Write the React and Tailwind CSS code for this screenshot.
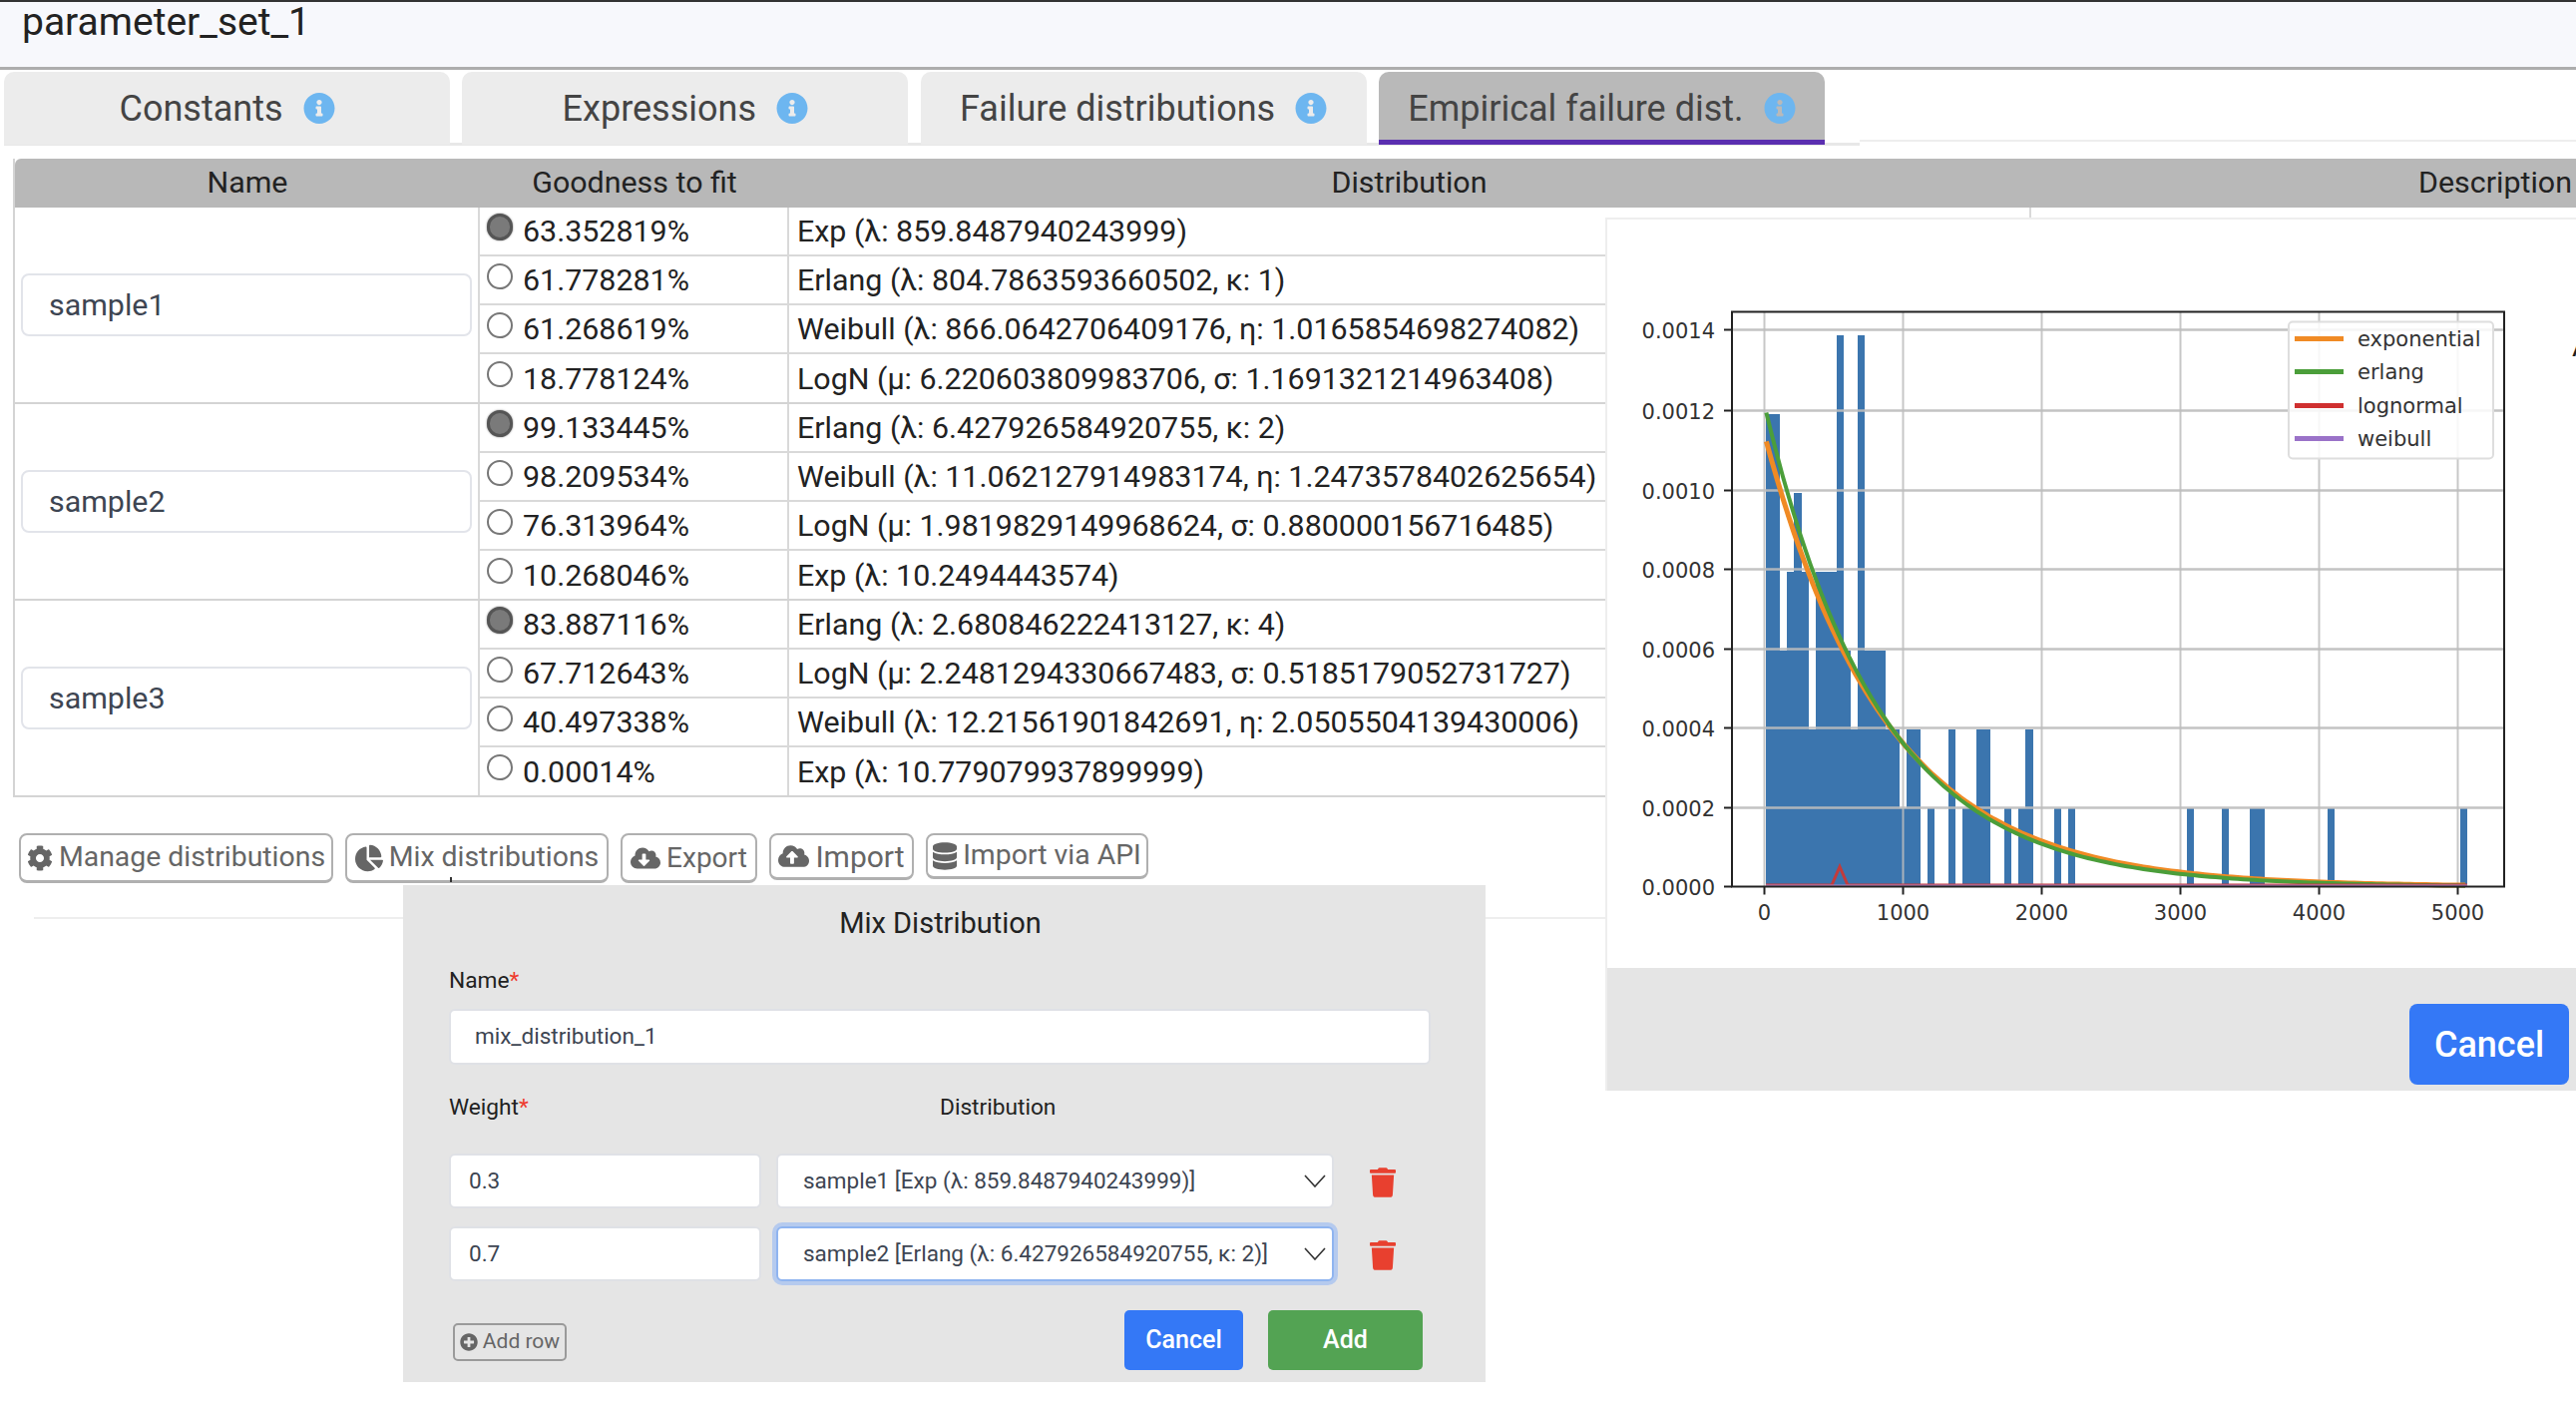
import { FaChartPie, FaCloudDownloadAlt, FaCloudUploadAlt, FaCog, FaDatabase, FaInfoCircle, FaPlusCircle, FaTrash } from "react-icons/fa";

const tabs = [
  { label: "Constants" },
  { label: "Expressions" },
  { label: "Failure distributions" },
  { label: "Empirical failure dist.", active: true },
];

const groups = [
  {
    name: "sample1",
    rows: [
      ["63.352819%", "Exp (λ: 859.8487940243999)"],
      ["61.778281%", "Erlang (λ: 804.7863593660502, κ: 1)"],
      ["61.268619%", "Weibull (λ: 866.0642706409176, η: 1.0165854698274082)"],
      ["18.778124%", "LogN (μ: 6.220603809983706, σ: 1.1691321214963408)"],
    ],
  },
  {
    name: "sample2",
    rows: [
      ["99.133445%", "Erlang (λ: 6.427926584920755, κ: 2)"],
      ["98.209534%", "Weibull (λ: 11.062127914983174, η: 1.2473578402625654)"],
      ["76.313964%", "LogN (μ: 1.9819829149968624, σ: 0.880000156716485)"],
      ["10.268046%", "Exp (λ: 10.2494443574)"],
    ],
  },
  {
    name: "sample3",
    rows: [
      ["83.887116%", "Erlang (λ: 2.680846222413127, κ: 4)"],
      ["67.712643%", "LogN (μ: 2.2481294330667483, σ: 0.5185179052731727)"],
      ["40.497338%", "Weibull (λ: 12.21561901842691, η: 2.0505504139430006)"],
      ["0.00014%", "Exp (λ: 10.779079937899999)"],
    ],
  },
];

const toolbar = [
  { label: "Manage distributions", Icon: FaCog, cls: "w-[315px] h-[50px] text-[28.4px]", icon: "w-[26px] h-[28px]" },
  { label: "Mix distributions", Icon: FaChartPie, cls: "w-[264px] h-[50px] text-[28.4px]", icon: "w-[28px] h-[30px]" },
  { label: "Export", Icon: FaCloudDownloadAlt, cls: "w-[137px] h-[50px] text-[28px]", icon: "w-[30px] h-[28px]" },
  { label: "Import", Icon: FaCloudUploadAlt, cls: "w-[145px] h-[47px] text-[30px]", icon: "w-[31px] h-[28px]" },
  { label: "Import via API", Icon: FaDatabase, cls: "w-[223px] h-[46px] text-[28.4px]", icon: "w-[24px] h-[28px]" },
];

// histogram: bin index -> height in counts, 100 bins, read off the picture
const bins = {
  0: 6, 1: 6, 2: 3, 3: 4, 4: 5, 5: 4, 6: 2, 7: 4, 8: 4, 9: 4, 10: 7, 11: 3, 12: 2, 13: 7, 14: 3, 15: 3, 16: 3,
  17: 2, 18: 2, 19: 1, 20: 2, 21: 2, 23: 1, 26: 2, 28: 1, 29: 1, 30: 2, 31: 2, 34: 1, 36: 1, 37: 2, 41: 1, 43: 1,
  60: 1, 65: 1, 69: 1, 70: 1, 80: 1, 99: 1,
};

const px = (v) => 1768.5 + v * 0.139;
const py = (v) => 888 - v * 398500;

function curve(lambda, scale = 1) {
  const pts = [];
  for (let v = 14; v <= 5072; v += 40) {
    pts.push(`${px(v).toFixed(1)},${py((scale / lambda) * Math.exp(-v / lambda)).toFixed(1)}`);
  }
  return pts.join(" ");
}

function Chart() {
  const yTicks = ["0.0000", "0.0002", "0.0004", "0.0006", "0.0008", "0.0010", "0.0012", "0.0014"];
  const yPos = [888, 809, 729, 650, 570, 491, 411, 330];
  const xTicks = [0, 1000, 2000, 3000, 4000, 5000];
  const legend = [
    ["exponential", "#f08a24", 339],
    ["erlang", "#4b9e3a", 372],
    ["lognormal", "#cf3030", 406],
    ["weibull", "#9a72c8", 439],
  ];
  return (
    <svg viewBox="1611 219.5 971 750" className="block w-[971px] h-[750px] font-['DejaVu_Sans',sans-serif]">
      {Object.entries(bins).map(([i, h]) => (
        <rect key={i} x={1770.3 + i * 7.03} y={888 - h * 79} width={7.1} height={h * 79} fill="#3b75ae" shapeRendering="crispEdges" />
      ))}
      {yPos.slice(1).map((y) => (
        <line key={y} x1="1736" x2="2510" y1={y} y2={y} stroke="#bdbdbd" strokeOpacity="0.9" strokeWidth="2.4" />
      ))}
      {xTicks.map((t) => (
        <line key={t} x1={px(t)} x2={px(t)} y1="312" y2="888" stroke="#bdbdbd" strokeOpacity="0.85" strokeWidth="2" />
      ))}
      <polyline points={curve(870, 0.99)} fill="none" stroke="#f08a24" strokeWidth="5" />
      <polyline points={curve(825)} fill="none" stroke="#4b9e3a" strokeWidth="4" />
      <polyline points="1770,886.5 1836,886.5 1844,868 1852,886.5 2473,886.5" fill="none" stroke="#c23b3b" strokeWidth="3" />
      <line x1="1770" x2="2473" y1="887" y2="887" stroke="#b583c4" strokeWidth="2" />
      <rect x="1736" y="312" width="774" height="576" fill="none" stroke="#222" strokeWidth="2" />
      {yTicks.map((t, i) => (
        <g key={t}>
          <line x1="1728" x2="1736" y1={yPos[i]} y2={yPos[i]} stroke="#222" strokeWidth="2" />
          <text x="1719" y={yPos[i] + 8} textAnchor="end" fontSize="21" fill="#333">{t}</text>
        </g>
      ))}
      {xTicks.map((t) => (
        <g key={t}>
          <line x1={px(t)} x2={px(t)} y1="888" y2="896" stroke="#222" strokeWidth="2" />
          <text x={px(t)} y="921" textAnchor="middle" fontSize="21" fill="#333">{t}</text>
        </g>
      ))}
      <rect x="2294" y="322" width="205" height="137" rx="4" fill="#fff" fillOpacity="0.85" stroke="#dedede" strokeWidth="2" />
      {legend.map(([name, color, y]) => (
        <g key={name}>
          <line x1="2300" x2="2349" y1={y} y2={y} stroke={color} strokeWidth="5" />
          <text x="2363" y={y + 7} fontSize="21" fill="#333">{name}</text>
        </g>
      ))}
    </svg>
  );
}

function Radio({ checked }) {
  return checked ? (
    <span className="mt-[6px] w-[26px] h-[27px] shrink-0 rounded-full bg-[#7a7a7a] border-[3px] border-[#555] shadow-[0_0_2px_#777]" />
  ) : (
    <span className="mt-[7px] w-[26px] h-[26px] shrink-0 rounded-full bg-white border-2 border-[#777]" />
  );
}

function Group({ group }) {
  return (
    <div className="flex border-b-2 border-[#d4d4d4]">
      <div className="w-[466px] shrink-0 flex items-center pl-[6px] pr-[6px] border-r-2 border-[#d9d9d9]">
        <div className="w-full h-[63px] flex items-center pl-[26px] rounded-[8px] border-2 border-[#e2e4ea] bg-white text-[30.4px] text-[#3d4552]">
          {group.name}
        </div>
      </div>
      <div className="flex-1">
        {group.rows.map(([fit, dist], i) => (
          <div key={fit} className={`flex ${i < 3 ? "h-[49px] border-b-2 border-[#d9d9d9]" : "h-[48px]"}`}>
            <div className="w-[310px] shrink-0 flex gap-[10px] pl-[7px] border-r-2 border-[#d9d9d9]">
              <Radio checked={i === 0} />
              <span className="self-center pt-[2px] text-[30.4px] leading-none text-[#222]">{fit}</span>
            </div>
            <span className="self-center pt-[2px] pl-[8px] text-[30.4px] leading-none text-[#222] whitespace-nowrap">{dist}</span>
          </div>
        ))}
      </div>
    </div>
  );
}

function TextBox({ className, children }) {
  return (
    <div className={`flex items-center rounded-[6px] bg-white border-2 border-[#dfe1e6] text-[22.5px] text-[#3d4552] whitespace-nowrap ${className}`}>
      {children}
    </div>
  );
}

function Chevron() {
  return (
    <svg viewBox="0 0 22 13" className="w-[22px] h-[13px] shrink-0 ml-auto mr-[6px]">
      <polyline points="1,1 11,12 21,1" fill="none" stroke="#333" strokeWidth="1.6" />
    </svg>
  );
}

function MixModal() {
  return (
    <div className="absolute left-[404px] top-[887px] w-[1085px] h-[498px] bg-[#e5e5e5] px-[46px] pt-[18px] text-[#222]">
      <div className="pr-[8px] text-center text-[29px] leading-[40px]">Mix Distribution</div>
      <div className="mt-[23px] text-[22.7px] leading-[30px]">
        Name<span className="text-[#ee3b2e]">*</span>
      </div>
      <TextBox className="mt-[13px] w-[984px] h-[56px] pl-[24px]">mix_distribution_1</TextBox>
      <div className="mt-[28px] flex text-[22.7px] leading-[30px]">
        <span className="w-[492px]">
          Weight<span className="text-[#ee3b2e]">*</span>
        </span>
        <span>Distribution</span>
      </div>
      <div className="mt-[31px] flex items-center h-[55px]">
        <TextBox className="w-[313px] h-full pl-[18px]">0.3</TextBox>
        <TextBox className="ml-[15px] w-[559px] h-full pl-[25px]">
          sample1 [Exp (λ: 859.8487940243999)]
          <Chevron />
        </TextBox>
        <FaTrash className="ml-[36px] mt-[3px] w-[26px] h-[30px] text-[#e8402f]" />
      </div>
      <div className="mt-[18px] flex items-center h-[55px]">
        <TextBox className="w-[313px] h-full pl-[18px]">0.7</TextBox>
        <TextBox className="ml-[15px] w-[559px] h-full pl-[25px] !border-[#8fb4f0] shadow-[0_0_0_4px_#b5caee]">
          sample2 [Erlang (λ: 6.427926584920755, κ: 2)]
          <Chevron />
        </TextBox>
        <FaTrash className="ml-[36px] mt-[3px] w-[26px] h-[30px] text-[#e8402f]" />
      </div>
      <div className="mt-[29px] flex items-start">
        <div className="ml-[4px] mt-[13px] w-[114px] h-[38px] flex items-center justify-center gap-[5px] rounded-[5px] border-2 border-[#9a9a9a] text-[21px] text-[#666]">
          <FaPlusCircle className="w-[18px] h-[18px]" />
          Add row
        </div>
        <div className="ml-[559px] w-[119px] h-[60px] flex items-center justify-center rounded-[5px] bg-[#3478f6] text-[25px] font-medium text-white">
          Cancel
        </div>
        <div className="ml-[25px] w-[155px] h-[60px] flex items-center justify-center rounded-[5px] bg-[#53a353] text-[25px] font-medium text-white">
          Add
        </div>
      </div>
    </div>
  );
}

export default function App() {
  return (
    <div className="relative w-[2582px] h-[1406px] overflow-hidden bg-white font-['Roboto',sans-serif]">
      <header className="h-[70px] border-t-2 border-t-[#333] border-b-[3px] border-b-[#adadad] bg-[#f7f8fc] pl-[22px] text-[39px] leading-[40px] text-[#222]">
        parameter_set_1
      </header>

      <div className="relative h-[75px] flex gap-[12.3px] pl-[4px] pt-[2px]">
        {tabs.map((tab) => (
          <div
            key={tab.label}
            className={`relative z-10 w-[447px] h-[73px] flex items-center justify-center gap-[20px] rounded-t-[10px] text-[36px] text-[#444] ${tab.active ? "bg-[#b9b9b9] shadow-[inset_0_-5px_0_#5b2fb0]" : "bg-[#ececec]"}`}
          >
            {tab.label}
            <FaInfoCircle className="w-[32px] h-[33px] text-[#6db6f0]" />
          </div>
        ))}
        <div className="absolute left-[4px] top-[73px] w-[1860px] h-[3px] bg-[#e8e8e8]" />
        <div className="absolute left-[1864px] top-[70px] right-0 h-[2px] bg-[#eeeeee]" />
      </div>

      <div className="ml-[13px] mt-[14px] w-[2955px] border-l-2 border-[#d4d4d4]">
        <div className="flex h-[49px] items-center pb-[2px] rounded-tl-[6px] bg-[#b8b8b8] text-[30.4px] text-[#222]">
          <span className="w-[466px] text-center">Name</span>
          <span className="w-[310px] text-center">Goodness to fit</span>
          <span className="w-[1243px] text-center">Distribution</span>
          <span className="w-[934px] text-center">Description</span>
        </div>
        <div className="relative">
          <div className="absolute left-[2019px] top-0 h-[600px] w-[2px] bg-[#d9d9d9]" />
          {groups.map((g) => (
            <Group key={g.name} group={g} />
          ))}
        </div>
      </div>

      <div className="ml-[19px] mt-[36px] flex items-start gap-[12px]">
        {toolbar.map(({ label, Icon, cls, icon }) => (
          <div
            key={label}
            className={`${cls} flex items-center justify-center gap-[6px] rounded-[8px] border-2 border-[#b0b0b0] border-b-[3px] bg-white text-[#666] whitespace-nowrap`}
          >
            <Icon className={`${icon} shrink-0`} />
            {label}
          </div>
        ))}
      </div>
      <div className="ml-[34px] mt-[34px] h-[2px] bg-[#eeeeee]" />

      <div className="absolute left-[451px] top-[879px] w-[2px] h-[5px] bg-[#333]" />
      <MixModal />

      <div className="absolute left-[1609px] top-[218px] w-[973px] h-[875px] border-t-2 border-l-2 border-[#eeeeee] bg-white">
        <Chart />
        <span className="absolute left-[967px] top-[112px] text-[30px] leading-none text-[#222]">A</span>
        <div className="h-[123px] flex items-start bg-[#e5e5e5] pt-[36px] pl-[804px]">
          <div className="w-[160px] h-[81px] flex items-center justify-center rounded-[8px] bg-[#3478f6] text-[36px] font-medium text-white">
            Cancel
          </div>
        </div>
      </div>
    </div>
  );
}
